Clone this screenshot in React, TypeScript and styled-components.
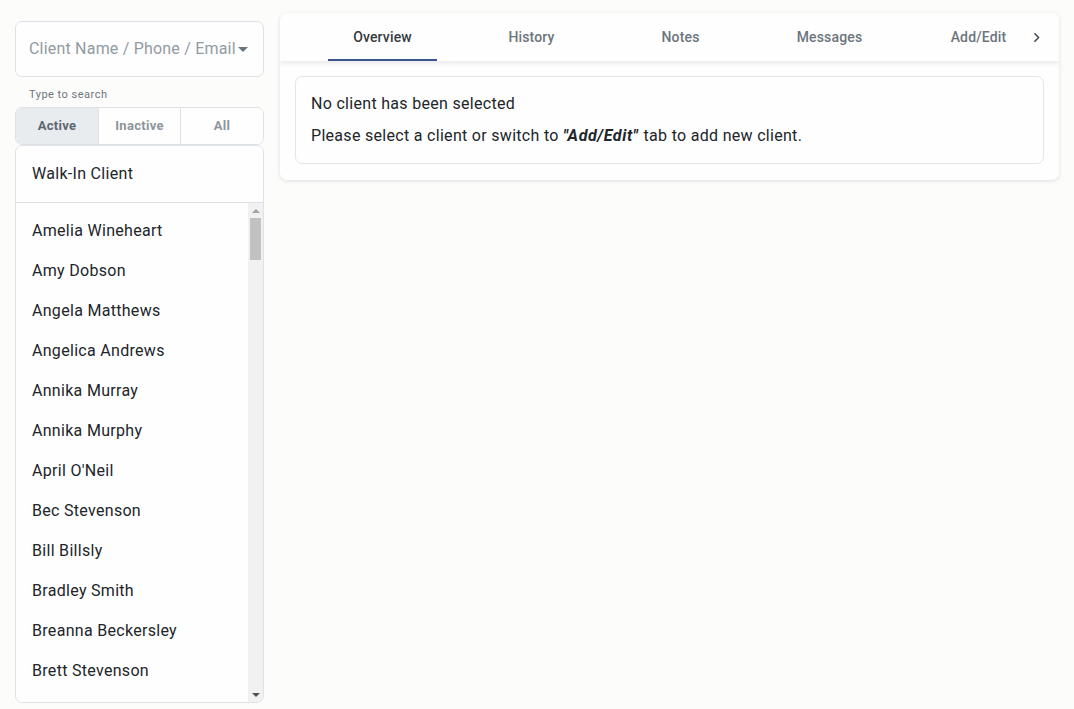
import React, { useState } from "react";
import styled, { createGlobalStyle } from "styled-components";

const clients = [
  "Amelia Wineheart",
  "Amy Dobson",
  "Angela Matthews",
  "Angelica Andrews",
  "Annika Murray",
  "Annika Murphy",
  "April O'Neil",
  "Bec Stevenson",
  "Bill Billsly",
  "Bradley Smith",
  "Breanna Beckersley",
  "Brett Stevenson",
];

const tabs = ["Overview", "History", "Notes", "Messages", "Add/Edit"];
const filters = ["Active", "Inactive", "All"];

const GlobalStyle = createGlobalStyle`
  html, body {
    margin: 0;
    padding: 0;
    background: #fcfcfb;
    font-family: Roboto, "Noto Sans", Arial, sans-serif;
    letter-spacing: 0.3px;
    color: #212529;
  }
  * {
    box-sizing: border-box;
  }
`;

const App: React.FC = () => {
  const [filter, setFilter] = useState<string>("Active"); // 선택된 필터
  const [tab, setTab] = useState<string>("Overview"); // 선택된 탭

  return (
    <>
      <GlobalStyle />
      <Page>
        <Sidebar>
          <SearchBox>
            <SearchPlaceholder>Client Name / Phone / Email</SearchPlaceholder>
            <Caret />
          </SearchBox>
          <Hint>Type to search</Hint>
          <FilterGroup>
            {filters.map((f) => (
              <FilterButton
                key={f}
                $active={f === filter}
                onClick={() => setFilter(f)}
              >
                {f}
              </FilterButton>
            ))}
          </FilterGroup>
          <ClientCard>
            <WalkIn>Walk-In Client</WalkIn>
            <ListArea>
              <ClientList>
                {clients.map((name) => (
                  <ClientItem key={name}>{name}</ClientItem>
                ))}
              </ClientList>
              <ScrollTrack>
                <ArrowUp />
                <TrackBody>
                  <Thumb />
                </TrackBody>
                <ArrowDown />
              </ScrollTrack>
            </ListArea>
          </ClientCard>
        </Sidebar>
        <Main>
          <Panel>
            <TabBar>
              <TabSpacer />
              <TabScroller>
                {tabs.map((t) => (
                  <Tab key={t} onClick={() => setTab(t)}>
                    <TabLabel $active={t === tab}>{t}</TabLabel>
                  </Tab>
                ))}
              </TabScroller>
              <ScrollButton>
                <svg width="13" height="13" viewBox="0 0 24 24" fill="none">
                  <path
                    d="M9 5l7 7-7 7"
                    stroke="#3f474f"
                    strokeWidth="2.8"
                    strokeLinecap="round"
                    strokeLinejoin="round"
                  />
                </svg>
              </ScrollButton>
            </TabBar>
            <PanelBody>
              <EmptyCard>
                <EmptyLine>No client has been selected</EmptyLine>
                <EmptyLine>
                  Please select a client or switch to{" "}
                  <Emph>"Add/Edit"</Emph> tab to add new client.
                </EmptyLine>
              </EmptyCard>
            </PanelBody>
          </Panel>
        </Main>
      </Page>
    </>
  );
};

export default App;

const Page = styled.div`
  display: flex;
  align-items: flex-start;
  gap: 16px;
  height: 709px;
  padding: 13px 15px 0 15px;
  overflow: hidden;
`;

const Sidebar = styled.aside`
  width: 249px;
  flex-shrink: 0;
  display: flex;
  flex-direction: column;
  padding-top: 8px;
`;

const SearchBox = styled.div`
  height: 56px;
  border: 1px solid #dee2e6;
  border-radius: 7px;
  background: #fefefe;
  display: flex;
  align-items: center;
  padding: 0 15px 0 13px;
`;

const SearchPlaceholder = styled.span`
  flex: 1;
  font-size: 16px;
  letter-spacing: 0.2px;
  color: #929aa2;
  white-space: nowrap;
  overflow: hidden;
  margin-top: -2px;
`;

const Caret = styled.span`
  width: 0;
  height: 0;
  border-left: 5px solid transparent;
  border-right: 5px solid transparent;
  border-top: 5px solid #6c757d;
  margin-left: 2px;
`;

const Hint = styled.div`
  font-size: 11px;
  letter-spacing: 0.5px;
  color: #6c757d;
  margin: 11px 0 6px 14px;
`;

const FilterGroup = styled.div`
  display: grid;
  grid-template-columns: 83px 82px 1fr;
  height: 38px;
  border: 1px solid #dee2e6;
  border-radius: 7px;
  overflow: hidden;
`;

const FilterButton = styled.button<{ $active: boolean }>`
  border: none;
  border-right: 1px solid #dee2e6;
  background: ${(p) => (p.$active ? "#e9ecef" : "#fefefe")};
  color: ${(p) => (p.$active ? "#5c6670" : "#8d959c")};
  font-family: inherit;
  font-size: 13px;
  font-weight: 700;
  letter-spacing: 0.3px;
  padding: 0 0 2px 0;
  cursor: pointer;
  &:last-child {
    border-right: none;
  }
`;

const ClientCard = styled.section`
  height: 558px;
  border: 1px solid #dee2e6;
  border-radius: 7px;
  background: #fefefe;
  display: flex;
  flex-direction: column;
  overflow: hidden;
`;

const WalkIn = styled.div`
  height: 57px;
  flex-shrink: 0;
  display: flex;
  align-items: center;
  padding: 0 0 2px 16px;
  font-size: 16px;
  border-bottom: 1px solid #dee2e6;
`;

const ListArea = styled.div`
  flex: 1;
  min-height: 0;
  display: flex;
`;

const ClientList = styled.ul`
  list-style: none;
  margin: 0;
  padding: 7px 0 0 0;
  flex: 1;
  overflow: hidden;
`;

const ClientItem = styled.li`
  height: 40px;
  display: flex;
  align-items: center;
  padding-left: 16px;
  font-size: 16px;
  color: #212529;
  cursor: pointer;
`;

const ScrollTrack = styled.div`
  width: 15px;
  flex-shrink: 0;
  background: #f1f1f1;
  display: flex;
  flex-direction: column;
`;

const ArrowUp = styled.div`
  height: 15px;
  display: flex;
  align-items: center;
  justify-content: center;
  &::before {
    content: "";
    border-left: 4px solid transparent;
    border-right: 4px solid transparent;
    border-bottom: 4px solid #a3a3a3;
  }
`;

const ArrowDown = styled(ArrowUp)`
  &::before {
    border-bottom: none;
    border-top: 4px solid #505050;
  }
`;

const TrackBody = styled.div`
  flex: 1;
  padding: 0 2px;
`;

const Thumb = styled.div`
  height: 42px;
  background: #c1c1c1;
`;

const Main = styled.main`
  flex: 1;
  min-width: 0;
`;

const Panel = styled.section`
  width: 779px;
  background: #fefefe;
  border-radius: 7px;
  box-shadow: 0 1px 4px rgba(0, 0, 0, 0.12);
  overflow: hidden;
`;

const TabBar = styled.nav`
  display: flex;
  height: 48px;
  box-shadow: 0 3px 5px rgba(0, 0, 0, 0.08);
  position: relative;
`;

const TabSpacer = styled.div`
  width: 28px;
  flex-shrink: 0;
`;

const TabScroller = styled.div`
  flex: 1;
  display: flex;
  overflow: hidden;
`;

const Tab = styled.div`
  width: 149px;
  flex-shrink: 0;
  display: flex;
  justify-content: center;
  padding: 0 20px;
  cursor: pointer;
`;

const TabLabel = styled.span<{ $active: boolean }>`
  flex: 1;
  display: flex;
  align-items: center;
  justify-content: center;
  font-size: 14px;
  font-weight: 500;
  letter-spacing: 0.15px;
  color: ${(p) => (p.$active ? "#343a40" : "#6c757d")};
  border-bottom: 2px solid ${(p) => (p.$active ? "#3b5591" : "transparent")};
  padding-top: 2px;
`;

const ScrollButton = styled.button`
  width: 40px;
  flex-shrink: 0;
  border: none;
  background: #fefefe;
  display: flex;
  align-items: center;
  justify-content: center;
  padding: 0 6px 0 0;
  cursor: pointer;
`;

const PanelBody = styled.div`
  padding: 15px 15px 16px 15px;
`;

const EmptyCard = styled.div`
  border: 1px solid #e3e5e7;
  border-radius: 7px;
  padding: 16px 15px 17px 15px;
  display: flex;
  flex-direction: column;
  gap: 11px;
`;

const EmptyLine = styled.p`
  margin: 0;
  font-size: 16px;
  line-height: 21px;
  color: #212529;
`;

const Emph = styled.em`
  font-weight: 700;
  letter-spacing: 0.6px;
  margin-right: 1px;
`;
